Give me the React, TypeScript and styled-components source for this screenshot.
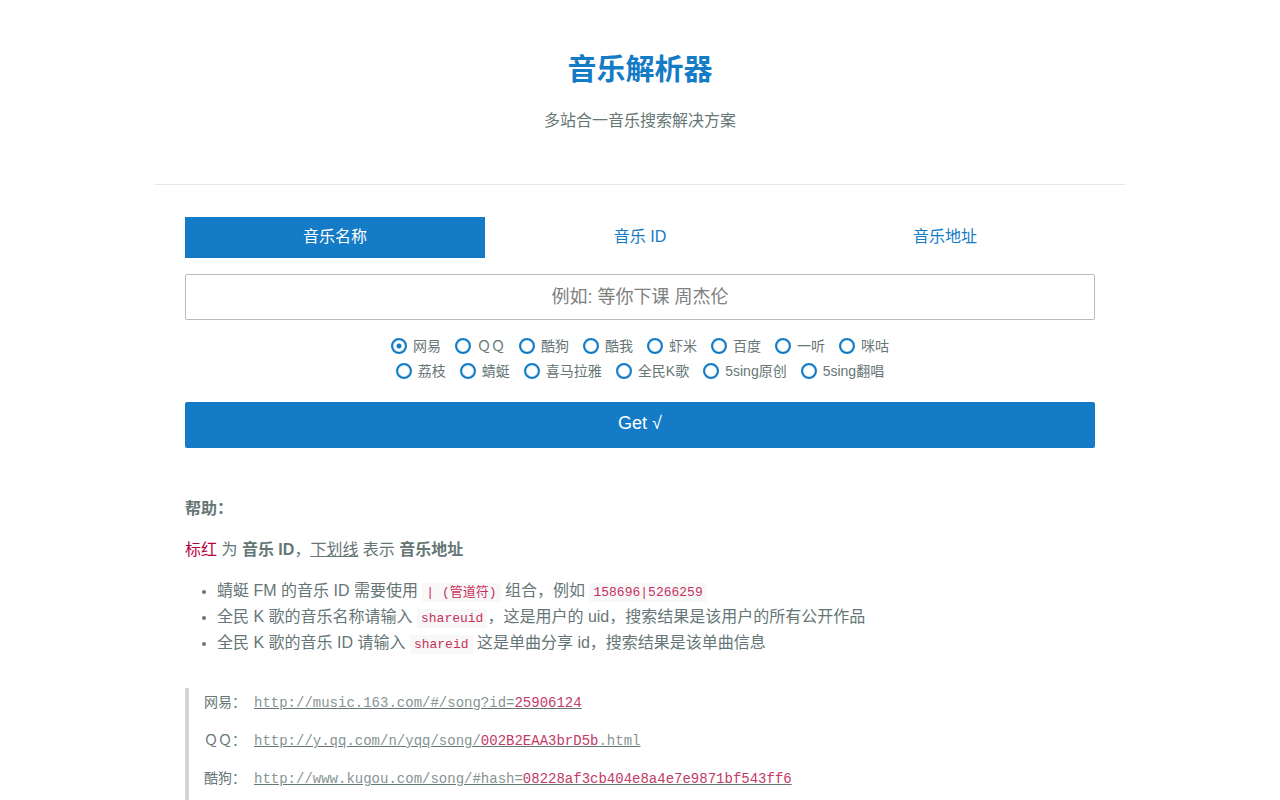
import React, { useState } from 'react'
import styled, { createGlobalStyle } from 'styled-components'

const modes = [
  { key: 'name', label: '音乐名称', placeholder: '例如: 等你下课 周杰伦' },
  { key: 'id', label: '音乐 ID', placeholder: '例如: 25906124' },
  { key: 'url', label: '音乐地址', placeholder: '例如: http://music.163.com/#/song?id=25906124' }
]

const sites = [
  ['网易', 'ＱＱ', '酷狗', '酷我', '虾米', '百度', '一听', '咪咕'],
  ['荔枝', '蜻蜓', '喜马拉雅', '全民K歌', '5sing原创', '5sing翻唱']
]

const examples = [
  { site: '网易', before: 'http://music.163.com/#/song?id=', id: '25906124', after: '' },
  { site: 'ＱＱ', before: 'http://y.qq.com/n/yqq/song/', id: '002B2EAA3brD5b', after: '.html' },
  { site: '酷狗', before: 'http://www.kugou.com/song/#hash=', id: '08228af3cb404e8a4e7e9871bf543ff6', after: '' }
]

export default function App (): JSX.Element {
  const [mode, setMode] = useState('name')
  const [site, setSite] = useState('网易')
  const [text, setText] = useState('')

  const current = modes.find((m) => m.key === mode)

  return (
    <>
      <GlobalStyle />
      <Page>
        <Header>
          <Title>音乐解析器</Title>
          <Subtitle>多站合一音乐搜索解决方案</Subtitle>
        </Header>
        <Content>
          <form onSubmit={(e) => e.preventDefault()}>
            <Tabs>
              {modes.map((m) => (
                <Tab key={m.key} type="button" $active={m.key === mode} onClick={() => setMode(m.key)}>
                  {m.label}
                </Tab>
              ))}
            </Tabs>
            <SearchInput
              aria-label={current.label}
              placeholder={current.placeholder}
              value={text}
              onChange={(e) => setText(e.target.value)}
            />
            <Sites>
              {sites.map((row, i) => (
                <SiteRow key={i}>
                  {row.map((name) => (
                    <SiteLabel key={name}>
                      <Radio type="radio" name="site" checked={site === name} onChange={() => setSite(name)} />
                      {name}
                    </SiteLabel>
                  ))}
                </SiteRow>
              ))}
            </Sites>
            <Submit type="submit">Get √</Submit>
          </form>
          <Help>
            <p><b>帮助：</b></p>
            <p>
              <Red>标红</Red> 为 <b>音乐 ID</b>，<u>下划线</u> 表示 <b>音乐地址</b>
            </p>
            <Notes>
              <li>蜻蜓 FM 的音乐 ID 需要使用 <Code>| (管道符)</Code> 组合，例如 <Code>158696|5266259</Code></li>
              <li>全民 K 歌的音乐名称请输入 <Code>shareuid</Code>，这是用户的 uid，搜索结果是该用户的所有公开作品</li>
              <li>全民 K 歌的音乐 ID 请输入 <Code>shareid</Code> 这是单曲分享 id，搜索结果是该单曲信息</li>
            </Notes>
            <Examples>
              {examples.map((e) => (
                <Example key={e.site}>
                  <SiteName>{e.site}：</SiteName>
                  <Link href={e.before + e.id + e.after}>
                    {e.before}<SongId>{e.id}</SongId>{e.after}
                  </Link>
                </Example>
              ))}
            </Examples>
          </Help>
        </Content>
      </Page>
    </>
  )
}

const blue = '#147bc7'
const gray = '#667676'
const sans = '"Liberation Sans", "Noto Sans CJK SC", sans-serif'
const mono = '"Liberation Mono", "Noto Sans CJK SC", monospace'

const GlobalStyle = createGlobalStyle`
  * {
    box-sizing: border-box;
  }

  body {
    margin: 0;
    background: #fff;
    color: ${gray};
    font: 16px/26px ${sans};
  }

  p {
    margin: 0;
  }

  button, input {
    font-family: inherit;
  }
`

const Page = styled.main`
  max-width: 970px;
  margin: 0 auto;
`

const Header = styled.header`
  padding: 48px 0 50px;
  border-bottom: 1px solid #e6e6e6;
  text-align: center;
`

const Title = styled.h1`
  margin: 0 0 16px;
  color: ${blue};
  font-size: 29px;
  line-height: 44px;
`

const Subtitle = styled.p`
  line-height: 26px;
`

const Content = styled.div`
  padding: 32px 30px 0;
`

const Tabs = styled.div`
  display: flex;
  gap: 5px;
  margin-bottom: 16px;
`

const Tab = styled.button<{ $active: boolean }>`
  flex: 1;
  height: 41px;
  padding: 0 0 6px;
  border: none;
  background: ${(props) => (props.$active ? blue : 'transparent')};
  color: ${(props) => (props.$active ? '#fff' : blue)};
  font-size: 16px;
  cursor: pointer;
`

const SearchInput = styled.input`
  display: block;
  width: 100%;
  height: 46px;
  padding: 0 12px;
  border: 1px solid #bbb;
  border-radius: 2px;
  color: #555;
  font-size: 18px;
  text-align: center;

  &::placeholder {
    color: #808080;
  }
`

const Sites = styled.div`
  margin: 14px 0 18px;
`

const SiteRow = styled.div`
  display: flex;
  flex-wrap: wrap;
  justify-content: center;
  gap: 0 14px;
`

const SiteLabel = styled.label`
  display: flex;
  align-items: center;
  gap: 6px;
  font-size: 14px;
  line-height: 25px;
  cursor: pointer;
`

const Radio = styled.input`
  appearance: none;
  width: 16px;
  height: 16px;
  margin: 0 0 2px;
  border: 2px solid ${blue};
  border-radius: 50%;
  box-shadow: inset 0 0 1px ${blue};

  &:checked {
    background: radial-gradient(circle, ${blue} 2px, transparent 3px);
  }
`

const Submit = styled.button`
  display: block;
  width: 100%;
  height: 46px;
  padding: 0 0 4px;
  border: none;
  border-radius: 2px;
  background: ${blue};
  color: #fff;
  font-size: 18px;
  cursor: pointer;
`

const Help = styled.section`
  display: flex;
  flex-direction: column;
  gap: 15px;
  padding-top: 48px;
`

const Red = styled.span`
  color: #b8003c;
`

const SongId = styled.span`
  color: #c23a66;
`

const Notes = styled.ul`
  margin: 0;
  padding-left: 32px;

  li::marker {
    font-size: 13px;
  }
`

const Code = styled.code`
  padding: 2px 4px;
  background: #f8f8f8;
  color: #c8305c;
  font: 13px ${mono};
`

const Examples = styled.blockquote`
  display: flex;
  flex-direction: column;
  gap: 11px;
  margin: 17px 0 0;
  padding: 1px 0 16px 15px;
  border-left: 4px solid #d4d4d4;
`

const Example = styled.div`
  display: flex;
  align-items: baseline;
  gap: 8px;
  font-size: 14px;
`

const SiteName = styled.span`
  min-width: 42px;
`

const Link = styled.a`
  color: #879494;
  font-family: ${mono};
  text-decoration-color: ${gray};
`
